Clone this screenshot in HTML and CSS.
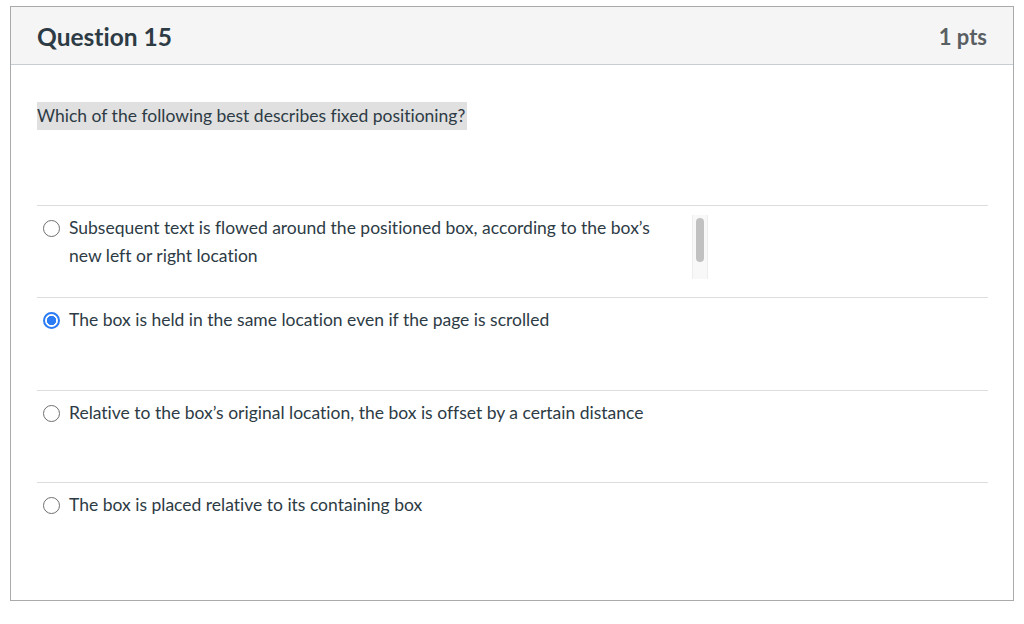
FILE: index.html
```html
<!DOCTYPE html>
<html>
<head>
<meta charset="utf-8">
<link rel="stylesheet" href="styles.css">
</head>
<body>
<div class="question">
  <div class="header">
    <h2 class="title">Question 15</h2>
    <div class="pts">1 pts</div>
  </div>
  <div class="content">
    <div class="qtext"><span class="hl">Which of the following best describes fixed positioning?</span></div>
    <div class="answers">
      <div class="answer">
        <span class="radio"></span>
        <span class="label">Subsequent text is flowed around the positioned box, according to the box’s new left or right location</span>
        <div class="scroll"><div class="thumb"></div></div>
      </div>
      <div class="answer">
        <span class="radio checked"></span>
        <span class="label">The box is held in the same location even if the page is scrolled</span>
      </div>
      <div class="answer">
        <span class="radio"></span>
        <span class="label">Relative to the box’s original location, the box is offset by a certain distance</span>
      </div>
      <div class="answer last">
        <span class="radio"></span>
        <span class="label">The box is placed relative to its containing box</span>
      </div>
    </div>
  </div>
</div>
</body>
</html>
```
FILE: styles.css
```css
* { box-sizing: border-box; }
html, body { margin: 0; padding: 0; background: #fff; }
body {
  font-family: Lato, "Open Sans", "Liberation Sans", sans-serif;
  font-variant-ligatures: none;
  color: #2d3b45;
  padding: 6px 0 0 10px;
}
.question {
  width: 1004px;
  height: 595px;
  border: 1px solid #aaaaaa;
  display: flex;
  flex-direction: column;
}
.header {
  height: 58px;
  background: #f5f5f5;
  border-bottom: 1px solid #c7cdd1;
  display: flex;
  align-items: center;
  justify-content: space-between;
  padding: 3px 26px 0 26px;
}
.title {
  margin: 0;
  font-size: 24.5px;
  font-weight: 700;
  color: #2d3b45;
  line-height: 30px;
}
.pts {
  font-size: 22px;
  font-weight: 700;
  color: #5a5f63;
  line-height: 30px;
}
.content {
  padding: 37px 25px 0 26px;
}
.qtext {
  font-size: 17.5px;
  line-height: 28px;
  height: 28px;
  margin-bottom: 75px;
}
.hl {
  display: inline-block;
  background: #e0e0e0;
  padding: 0 2px 0 0;
}
.answers {
  display: flex;
  flex-direction: column;
}
.answer {
  display: flex;
  align-items: flex-start;
  height: 92.33px;
  border-top: 1px solid #dddddd;
  padding: 8px 0 0 6px;
  font-size: 17.5px;
  line-height: 28px;
}
.radio {
  flex: none;
  width: 17px;
  height: 17px;
  margin-top: 6px;
  margin-right: 9px;
  border: 1px solid #6f6f6f;
  border-radius: 50%;
  background: #fff;
}
.radio.checked {
  border: 2px solid #2b7cf5;
  background: radial-gradient(circle, #2b7cf5 0 4.4px, #fff 5px);
}
.label {
  width: 600px;
}
.scroll {
  flex: none;
  width: 16px;
  height: 64px;
  margin: 1px 0 0 23px;
  background: #f8f8f8;
  border-left: 1px solid #ededed;
  border-right: 1px solid #ededed;
  padding: 3px 3px 0 3px;
}
.thumb {
  width: 8px;
  height: 44px;
  background: #c1c1c1;
  border-radius: 4px;
}
```
